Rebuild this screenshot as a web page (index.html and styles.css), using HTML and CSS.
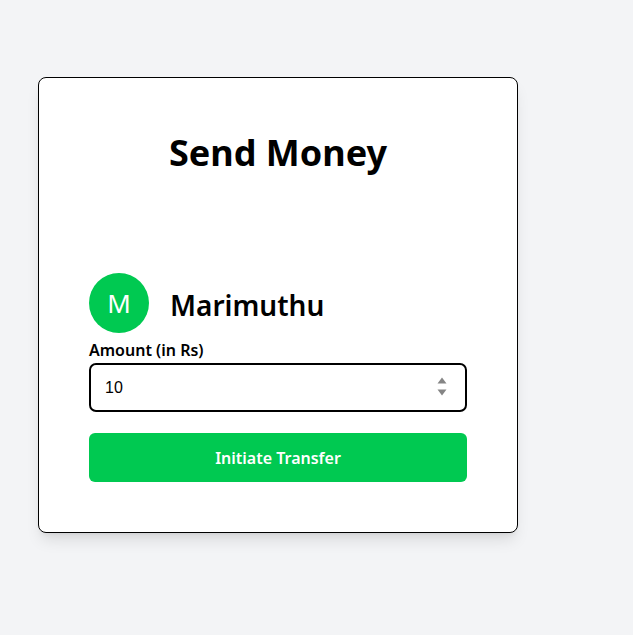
FILE: index.html
```html
<!DOCTYPE html>
<html lang="en">
<head>
<meta charset="utf-8">
<title>Send Money</title>
<link rel="stylesheet" href="styles.css">
</head>
<body>
<main class="page">
  <section class="card">
    <h2 class="title">Send Money</h2>
    <div class="recipient">
      <div class="avatar">M</div>
      <h3 class="name">Marimuthu</h3>
    </div>
    <div class="field">
      <label class="label" for="amount">Amount (in Rs)</label>
      <div class="input-wrap">
        <input id="amount" class="input" type="number" value="10">
        <svg class="spinner" width="10" height="20" viewBox="0 0 10 20" aria-hidden="true">
          <path d="M5 0.5 L9.5 6.5 L0.5 6.5 Z" fill="#858585"/>
          <path d="M0.5 12.5 L9.5 12.5 L5 18.5 Z" fill="#858585"/>
        </svg>
      </div>
    </div>
    <button class="btn" type="button">Initiate Transfer</button>
  </section>
</main>
</body>
</html>
```

FILE: styles.css
```css
* { box-sizing: border-box; }
html, body { margin: 0; padding: 0; }
body {
  background: #f3f4f6;
  font-family: "Noto Sans", "Open Sans", sans-serif;
  color: #000;
  width: 633px;
  height: 635px;
  overflow: hidden;
}
.page {
  padding: 77px 0 0 38px;
}
.card {
  width: 480px;
  background: #fff;
  border: 1px solid #000;
  border-radius: 8px;
  padding: 55px 50px 50px;
  box-shadow: 0 10px 15px -3px rgba(0,0,0,0.1), 0 4px 6px -4px rgba(0,0,0,0.1);
}
.title {
  margin: 0;
  text-align: center;
  font-size: 36px;
  line-height: 40px;
  font-weight: 700;
  letter-spacing: 0;
}
.recipient {
  margin-top: 100px;
  display: flex;
  align-items: center;
  gap: 21px;
}
.avatar {
  width: 60px;
  height: 60px;
  border-radius: 50%;
  background: #00c951;
  color: #fff;
  display: flex;
  align-items: center;
  justify-content: center;
  font-size: 26px;
  font-weight: 400;
}
.name {
  margin: 3px 0 0;
  font-size: 28px;
  line-height: 36px;
  font-weight: 600;
}
.field {
  margin-top: 5px;
  display: flex;
  flex-direction: column;
  gap: 1px;
}
.label {
  font-size: 16px;
  line-height: 24px;
  font-weight: 600;
}
.input-wrap {
  position: relative;
}
.input {
  width: 100%;
  height: 49px;
  border: 2px solid #000;
  border-radius: 7px;
  padding: 0 14px;
  font-family: "Liberation Sans", Arial, sans-serif;
  font-size: 16px;
  color: #000;
  background: #fff;
  outline: none;
  -moz-appearance: textfield;
}
.input::-webkit-inner-spin-button,
.input::-webkit-outer-spin-button {
  -webkit-appearance: none;
  margin: 0;
}
.spinner {
  position: absolute;
  right: 20px;
  top: 14px;
}
.btn {
  margin-top: 21px;
  width: 100%;
  height: 49px;
  border: 0;
  border-radius: 6px;
  background: #00c951;
  color: #fff;
  font-family: "Noto Sans", "Open Sans", sans-serif;
  font-size: 16px;
  font-weight: 600;
  cursor: pointer;
}
```
